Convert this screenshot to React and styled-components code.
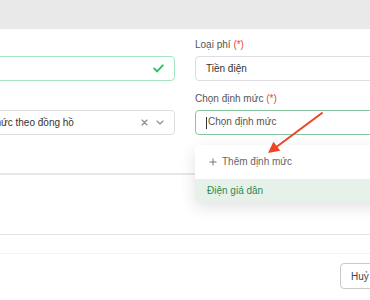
import React from "react";
import styled, { createGlobalStyle } from "styled-components";

const GlobalStyle = createGlobalStyle`
    html, body {
        margin: 0;
        padding: 0;
        background: #ffffff;
        overflow: hidden;
    }
    body {
        font-family: "Liberation Sans", Arial, sans-serif;
    }
`;

const Page = styled.div`
    position: relative;
    width: 370px;
    height: 300px;
    overflow: hidden;
    background: #ffffff;
`;

const TopBand = styled.div`
    height: 29px;
    background: #e9e9e9;
`;

const Form = styled.div`
    display: grid;
    grid-template-columns: 260px 260px;
    column-gap: 20px;
    row-gap: 11px;
    margin-left: -85px;
    padding-top: 9px;
    padding-bottom: 38px;
    border-bottom: 2px solid #e8e8ec;
`;

const Field = styled.div`
    position: relative;
    display: flex;
    flex-direction: column;
`;

const Label = styled.div`
    font-size: 10px;
    line-height: 14px;
    height: 14px;
    margin-bottom: 4px;
    color: #555555;
    white-space: nowrap;
`;

const Req = styled.span`
    color: #e5483b;
`;

const InputBox = styled.div`
    box-sizing: border-box;
    height: 25px;
    display: flex;
    align-items: center;
    gap: 8px;
    padding: 0 10px;
    border: 1px solid ${(p) => (p.$valid ? "#a7e4c2" : p.$focus ? "#86c79f" : "#dedee2")};
    border-radius: 4px;
    background: #ffffff;
    font-size: 10px;
    color: ${(p) => (p.$muted ? "#555555" : "#333333")};
`;

const Value = styled.span`
    flex: 1;
    white-space: nowrap;
    overflow: hidden;
`;

const Caret = styled.span`
    display: inline-block;
    width: 1px;
    height: 12px;
    margin-right: 1px;
    background: #333333;
    vertical-align: middle;
`;

const Menu = styled.div`
    position: absolute;
    top: calc(100% + 10px);
    left: 0;
    width: 230px;
    padding-top: 5px;
    background: #ffffff;
    border-radius: 4px;
    box-shadow: 0 5px 16px rgba(0, 0, 0, 0.12);
    overflow: hidden;
    z-index: 2;
`;

const MenuItem = styled.div`
    height: 23px;
    display: flex;
    align-items: center;
    gap: 5px;
    padding-left: ${(p) => (p.$active ? "12px" : "14px")};
    margin-bottom: ${(p) => (p.$active ? "0" : "6px")};
    font-size: 10px;
    color: ${(p) => (p.$active ? "#2f8a55" : "#666666")};
    background: ${(p) => (p.$active ? "#e6f1ea" : "transparent")};
`;

const Blank = styled.div`
    height: 59px;
    border-bottom: 1px solid #e2e2e6;
`;

const FooterTop = styled.div`
    height: 18px;
    border-bottom: 1px solid #f3f3f5;
`;

const ButtonRow = styled.div`
    width: 440px;
    display: flex;
    justify-content: flex-end;
    gap: 8px;
    padding: 9px 12px 0 0;
    box-sizing: border-box;
`;

const Button = styled.div`
    box-sizing: border-box;
    height: 26px;
    width: ${(p) => p.$w}px;
    display: flex;
    align-items: center;
    padding-left: 10px;
    border: 1px solid ${(p) => (p.$primary ? "#2f9e5e" : "#c9c9cc")};
    border-radius: 4px;
    font-size: 10px;
    color: ${(p) => (p.$primary ? "#ffffff" : "#444444")};
    background: ${(p) => (p.$primary ? "#2f9e5e" : "#ffffff")};
`;

const Arrow = styled.svg`
    position: absolute;
    left: 0;
    top: 0;
    pointer-events: none;
    z-index: 3;
`;

const Check = () => (
    <svg width="11" height="9" viewBox="0 0 11 9">
        <path d="M1.2 4.6 L4.2 7.4 L9.8 1.4" fill="none" stroke="#33c06c" strokeWidth="2" strokeLinecap="round" strokeLinejoin="round" />
    </svg>
);

const Clear = () => (
    <svg width="7" height="7" viewBox="0 0 7 7">
        <path d="M1 1 L6 6 M6 1 L1 6" stroke="#8a8a8e" strokeWidth="1.1" strokeLinecap="round" />
    </svg>
);

const Chevron = () => (
    <svg width="8" height="5" viewBox="0 0 8 5">
        <path d="M1 1 L4 4 L7 1" fill="none" stroke="#8a8a8e" strokeWidth="1.1" strokeLinecap="round" strokeLinejoin="round" />
    </svg>
);

const Plus = () => (
    <svg width="8" height="8" viewBox="0 0 8 8">
        <path d="M4 0.5 V7.5 M0.5 4 H7.5" stroke="#777777" strokeWidth="1" />
    </svg>
);

function App() {
    return (
        <Page>
            <GlobalStyle />
            <TopBand />
            <Form>
                <Field>
                    <Label>Tên phí <Req>(*)</Req></Label>
                    <InputBox $valid>
                        <Value>Điện</Value>
                        <Check />
                    </InputBox>
                </Field>
                <Field>
                    <Label>Loại phí <Req>(*)</Req></Label>
                    <InputBox>
                        <Value>Tiền điện</Value>
                    </InputBox>
                </Field>
                <Field>
                    <Label>Cách tính</Label>
                    <InputBox>
                        <Value>Tính theo định mức theo đồng hồ</Value>
                        <Clear />
                        <Chevron />
                    </InputBox>
                </Field>
                <Field>
                    <Label>Chọn định mức <Req>(*)</Req></Label>
                    <InputBox $focus $muted>
                        <Value><Caret />Chọn định mức</Value>
                    </InputBox>
                    <Menu>
                        <MenuItem><Plus />Thêm định mức</MenuItem>
                        <MenuItem $active>Điện giá dân</MenuItem>
                    </Menu>
                </Field>
            </Form>
            <Blank />
            <FooterTop />
            <ButtonRow>
                <Button $w={50}>Huỷ</Button>
                <Button $w={30} $primary>Lưu</Button>
            </ButtonRow>
            <Arrow width="370" height="300" viewBox="0 0 370 300">
                <line x1="322" y1="113" x2="277" y2="146.5" stroke="#ee4423" strokeWidth="2" strokeLinecap="round" />
                <polygon points="268,153 280.3,150.8 273.4,141.8" fill="#ee4423" />
            </Arrow>
        </Page>
    );
}

export default App;
